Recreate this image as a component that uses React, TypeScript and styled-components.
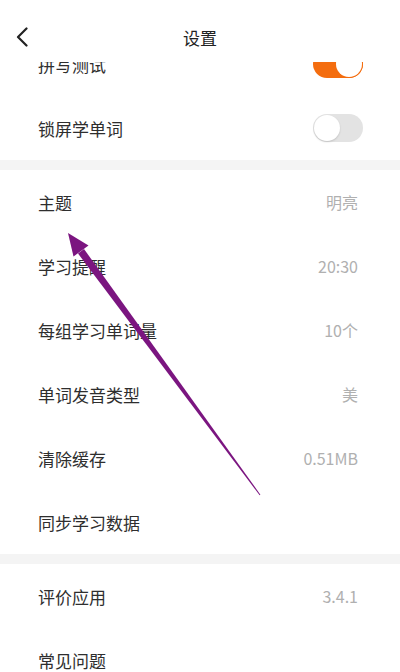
import React from "react";
import styled, { createGlobalStyle } from "styled-components";

const GlobalStyle = createGlobalStyle`
  html, body { margin: 0; padding: 0; background: #ffffff; }
  body { font-family: "Noto Sans CJK SC", "Noto Sans", Roboto, sans-serif; }
  * { box-sizing: border-box; }
`;

const Screen = styled.div`
  position: relative;
  width: 400px;
  height: 672px;
  overflow: hidden;
  display: flex;
  flex-direction: column;
  background: #ffffff;
`;

const Header = styled.header`
  position: relative;
  z-index: 1;
  flex-shrink: 0;
  height: 62px;
  padding-top: 12px;
  display: grid;
  grid-template-columns: 56px 1fr 56px;
  align-items: center;
  background: #ffffff;
`;

const BackButton = styled.button`
  display: flex;
  align-items: center;
  justify-content: flex-start;
  padding: 0 0 0 15px;
  margin-top: -1px;
  border: none;
  background: none;
  height: 32px;
`;

const Title = styled.h1`
  margin: 0;
  text-align: center;
  font-size: 17px;
  font-weight: 400;
  color: #222;
`;

const Viewport = styled.div`
  flex: 1;
  overflow: hidden;
`;

const List = styled.div<{ $offset: number }>`
  margin-top: ${(p) => -p.$offset}px;
`;

const Section = styled.section`
  background: #ffffff;
`;

const Gap = styled.div`
  height: 10px;
  background: #f4f4f4;
`;

const Row = styled.div`
  height: 64px;
  display: flex;
  align-items: center;
  justify-content: space-between;
  padding: 0 37px 0 38px;
`;

const Label = styled.span`
  font-size: 17px;
  color: #2e2e2e;
`;

const Value = styled.span`
  margin-right: 5px;
  font-size: 16px;
  color: #b0b0b0;
`;

const Track = styled.div<{ $on: boolean }>`
  position: relative;
  width: 50px;
  height: 28px;
  border-radius: 14px;
  background: ${(p) => (p.$on ? "#f46d0f" : "#e3e3e3")};
`;

const Knob = styled.div<{ $on: boolean }>`
  position: absolute;
  top: 1px;
  left: ${(p) => (p.$on ? "23px" : "1px")};
  width: 26px;
  height: 26px;
  border-radius: 50%;
  background: #ffffff;
  box-shadow: ${(p) =>
    p.$on ? "0 0 0 1px #f46d0f" : "0 1px 2px rgba(0,0,0,0.15)"};
`;

const Arrow = styled.svg`
  position: absolute;
  left: 0;
  top: 0;
  pointer-events: none;
  z-index: 2;
`;

const Toggle = ({ on }: { on: boolean }) => (
  <Track $on={on}>
    <Knob $on={on} />
  </Track>
);

type Item = { label: string; value?: string; toggle?: boolean };

const sections: Item[][] = [
  [
    { label: "拼写测试", toggle: true },
    { label: "锁屏学单词", toggle: false },
  ],
  [
    { label: "主题", value: "明亮" },
    { label: "学习提醒", value: "20:30" },
    { label: "每组学习单词量", value: "10个" },
    { label: "单词发音类型", value: "美" },
    { label: "清除缓存", value: "0.51MB" },
    { label: "同步学习数据" },
  ],
  [
    { label: "评价应用", value: "3.4.1" },
    { label: "常见问题" },
  ],
];

export default function App() {
  return (
    <>
      <GlobalStyle />
      <Screen>
        <Header>
          <BackButton aria-label="返回">
            <svg width="14" height="20" viewBox="0 0 14 20">
              <path
                d="M11.5 1.5 L3 10 L11.5 18.5"
                fill="none"
                stroke="#222"
                strokeWidth="2.2"
                strokeLinecap="round"
                strokeLinejoin="round"
              />
            </svg>
          </BackButton>
          <Title>设置</Title>
          <div />
        </Header>
        <Viewport>
          <List $offset={30}>
            {sections.map((items, si) => (
              <React.Fragment key={si}>
                {si > 0 && <Gap />}
                <Section>
                  {items.map((it) => (
                    <Row key={it.label}>
                      <Label>{it.label}</Label>
                      {it.toggle !== undefined ? (
                        <Toggle on={it.toggle} />
                      ) : it.value ? (
                        <Value>{it.value}</Value>
                      ) : null}
                    </Row>
                  ))}
                </Section>
              </React.Fragment>
            ))}
          </List>
        </Viewport>
        <Arrow width="400" height="672" viewBox="0 0 400 672">
          <polygon
            points="68,233 88.5,245.5 73.5,256.5"
            fill="#7b1580"
          />
          <polygon
            points="84,249 78,253.5 259.6,495.3 260.4,494.7"
            fill="#7b1580"
          />
        </Arrow>
      </Screen>
    </>
  );
}
